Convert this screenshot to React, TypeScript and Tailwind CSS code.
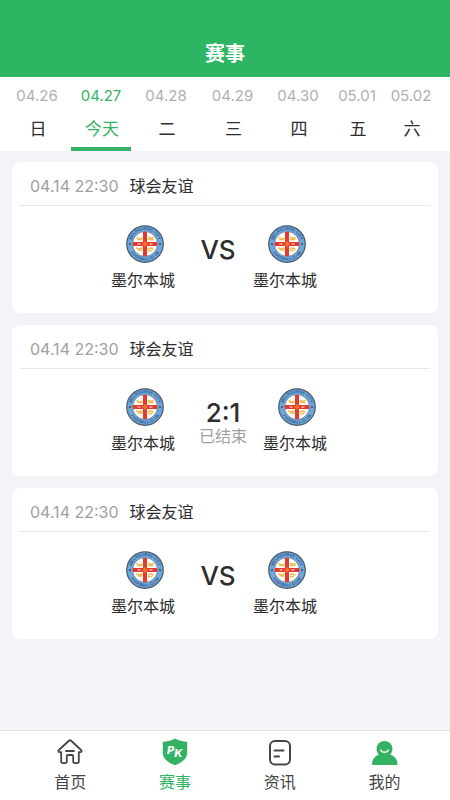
import React, { useId, useState } from 'react';

interface Day {
  date: string;
  label: string;
}

interface Match {
  id: number;
  time: string;
  league: string;
  home: string;
  away: string;
  score?: string;
  status?: string;
}

const days: Day[] = [
  { date: '04.26', label: '日' },
  { date: '04.27', label: '今天' },
  { date: '04.28', label: '二' },
  { date: '04.29', label: '三' },
  { date: '04.30', label: '四' },
  { date: '05.01', label: '五' },
  { date: '05.02', label: '六' },
];

const matches: Match[] = [
  { id: 1, time: '04.14 22:30', league: '球会友谊', home: '墨尔本城', away: '墨尔本城' },
  { id: 2, time: '04.14 22:30', league: '球会友谊', home: '墨尔本城', away: '墨尔本城', score: '2:1', status: '已结束' },
  { id: 3, time: '04.14 22:30', league: '球会友谊', home: '墨尔本城', away: '墨尔本城' },
];

const Crest: React.FC = () => {
  const id = useId();
  return (
    <svg viewBox="0 0 76 76" className="w-[38px] h-[38px]" aria-hidden="true">
      <defs>
        <path id={`${id}-top`} d="M10 38a28 28 0 0 1 56 0" />
        <path id={`${id}-bottom`} d="M5 38a33 33 0 0 0 66 0" />
      </defs>
      <circle cx="38" cy="38" r="36.5" fill="#6fa6da" stroke="#4a5a6b" strokeWidth="2.5" />
      <circle cx="38" cy="38" r="25" fill="#fffdf8" stroke="#5b7088" strokeWidth="1.5" />
      <g fill="none" stroke="#f0bb52" strokeWidth="3" strokeLinecap="round">
        <path d="M22 25l4 3 6-1M24 29h7M45 25l4 2 5-2M45 29h9" />
        <path d="M21 46l5 2 6-2M25 50h7M45 47l5-1 4 2M45 51h6" />
      </g>
      <path d="M34 14h8v20h20v8H42v20h-8V42H14v-8h20z" fill="#e5382f" />
      <path d="M38 32l6 6-6 6-6-6z" fill="#f0702c" />
      <path d="M23 38h6M47 38h6" stroke="#f7b3a4" strokeWidth="3" />
      <circle cx="8" cy="38" r="2" fill="#2f4a6b" />
      <circle cx="68" cy="38" r="2" fill="#2f4a6b" />
      <g fill="#345b8f" fontFamily="Liberation Sans, sans-serif" fontSize="8" fontWeight="700" textAnchor="middle">
        <text><textPath href={`#${id}-top`} startOffset="50%">MELBOURNE CITY</textPath></text>
        <text><textPath href={`#${id}-bottom`} startOffset="50%">FOOTBALL CLUB</textPath></text>
      </g>
    </svg>
  );
};

const Team: React.FC<{ name: string }> = ({ name }) => (
  <div className="flex flex-col items-center w-16">
    <div className="pl-1">
      <Crest />
    </div>
    <span className="mt-[5px] text-base leading-6 whitespace-nowrap">{name}</span>
  </div>
);

const MatchCard: React.FC<{ match: Match }> = ({ match }) => (
  <article className="bg-white rounded-lg px-2 pb-[21px]">
    <div className="flex items-center gap-[11px] h-11 pt-[5px] px-[10px] border-b border-[#e8e8ea]">
      <time className="text-base text-[#a0a0a0]">{match.time}</time>
      <span className="text-base">{match.league}</span>
    </div>
    <div className="flex pt-[19px] pl-[91px]">
      <Team name={match.home} />
      <div className="pl-6 pr-4 pt-[10px]">
        <div className="min-w-[38px] flex flex-col items-center">
          {match.score ? (
            <>
              <span className="text-[26px] leading-[30px] font-medium">{match.score}</span>
              <span className="text-base leading-4 text-[#a0a0a0]">{match.status}</span>
            </>
          ) : (
            <span className="text-[26px] leading-[30px] font-medium">VS</span>
          )}
        </div>
      </div>
      <Team name={match.away} />
    </div>
  </article>
);

const HomeIcon = () => (
  <svg viewBox="0 0 28 28" className="w-7 h-7" fill="none" stroke="#454545" strokeWidth="1.800" strokeLinejoin="round" strokeLinecap="round">
    <path d="M13.200 2.500 2.900 12c-1.100 1.100-.5 2.200.8 2.200h1.500v9.300c0 1 .6 1.600 1.600 1.600h2.400c1 0 1.600-.6 1.600-1.600v-5.300c0-.7.400-1.200 1.200-1.200h4c.8 0 1.200.5 1.200 1.200v5.300c0 1 .6 1.600 1.600 1.600h2.400c1 0 1.600-.6 1.600-1.600v-9.300h1.500c1.300 0 1.900-1.100.8-2.200L14.800 2.500c-.5-.5-1.100-.5-1.600 0z" />
    <path d="M10 13h8" />
  </svg>
);

const MatchIcon = () => (
  <svg viewBox="0 0 28 28" className="w-7 h-7">
    <path d="M14 .6c3.400 2 7 2.900 10.800 3.100.9 0 1.400.5 1.400 1.400v9.500c0 6.200-5.200 10.200-12.200 12.600C7 24.800 1.800 20.800 1.800 14.600V5.100c0-.9.500-1.400 1.400-1.400C7 3.500 10.600 2.600 14 .6z" fill="#33b263" />
    <text x="6" y="16" fill="#fff" fontFamily="Inter, sans-serif" fontWeight="800" fontStyle="italic" fontSize="11">
      P<tspan dy="3">K</tspan>
    </text>
  </svg>
);

const NewsIcon = () => (
  <svg viewBox="0 0 28 28" className="w-7 h-7" fill="none" stroke="#454545" strokeWidth="2" strokeLinecap="round">
    <rect x="4" y="3" width="20" height="23.500" rx="5" />
    <path d="M8.500 12.500h9M8.500 18.500h4.500" />
  </svg>
);

const MeIcon = () => (
  <svg viewBox="0 0 28 28" className="w-7 h-7">
    <circle cx="13.500" cy="11" r="8" fill="#33b263" />
    <path d="M1 26c0-5.500 4-9 8-9.500h9c4.500.5 8.500 4 8.500 9.500 0 .6-.3 1-1 1H2c-.7 0-1-.4-1-1z" fill="#33b263" />
    <path d="M9.800 12.300c1.500 2.600 6 2.600 7.400 0" fill="none" stroke="#fff" strokeWidth="1.600" strokeLinecap="round" />
  </svg>
);

const navItems = [
  { label: '首页', icon: <HomeIcon /> },
  { label: '赛事', icon: <MatchIcon />, active: true },
  { label: '资讯', icon: <NewsIcon /> },
  { label: '我的', icon: <MeIcon /> },
];

export default function App() {
  const [selected, setSelected] = useState(1);

  return (
    <div className="min-h-screen flex flex-col bg-[#f3f3f8] text-[#2d2d2d] font-[Inter,'Noto_Sans_CJK_SC',sans-serif]">
      <header className="bg-[#2db564] pt-[38px] pb-[7px]">
        <h1 className="text-xl leading-8 font-bold text-white text-center">赛事</h1>
      </header>

      {/* Date tabs */}
      <div className="grid grid-cols-[68fr_60fr_70fr_63fr_68fr_50fr_58fr] bg-white pl-[3px] pr-[10px]">
        {days.map((day, index) => (
          <button
            key={day.date}
            type="button"
            aria-pressed={index === selected}
            onClick={() => setSelected(index)}
            className={`flex flex-col items-center pt-[9px] border-b-4 ${
              index === selected ? 'border-[#36b266] text-[#36b266]' : 'border-transparent'
            }`}
          >
            <span className={`text-[15px] leading-5 ${index === selected ? '' : 'text-[#b0b0b0]'}`}>{day.date}</span>
            <span className="mt-[11px] mb-[6px] pl-[2px] text-[17px] leading-6">{day.label}</span>
          </button>
        ))}
      </div>

      <main className="flex-1 flex flex-col gap-3 px-3 pt-[11px] pb-3">
        {matches.map((match) => (
          <MatchCard key={match.id} match={match} />
        ))}
      </main>

      <nav className="flex bg-white border-t border-[#e2e2e6] pl-[18px] pr-[13px] pt-[7px] pb-[6px]">
        {navItems.map((item) => (
          <a
            key={item.label}
            href="#"
            aria-current={item.active ? 'page' : undefined}
            className={`flex-1 flex flex-col items-center gap-1 ${item.active ? 'text-[#33b263]' : 'text-[#454545]'}`}
          >
            {item.icon}
            <span className="text-base leading-6">{item.label}</span>
          </a>
        ))}
      </nav>
    </div>
  );
}
